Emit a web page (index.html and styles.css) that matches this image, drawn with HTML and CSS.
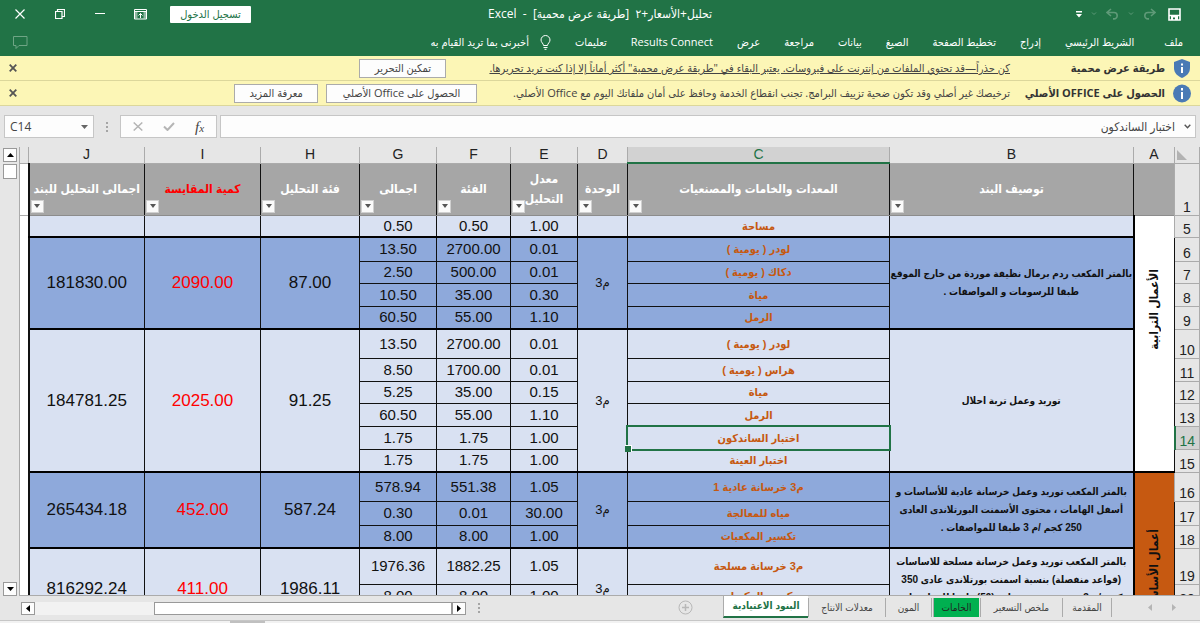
FILE: index.html
```
<!DOCTYPE html>
<html lang="ar" dir="rtl">
<head>
    <meta charset="UTF-8">
    <meta name="viewport" content="width=device-width, initial-scale=1.0">
    <title>تحليل+الأسعار+٢ - Excel</title>
    <link rel="stylesheet" href="styles.css">
</head>
<body>
    <header class="top">
        <div class="titlebar">
            <div class="quick">
                <button class="icon-btn save" aria-label="حفظ">
                    <svg width="13" height="13" viewBox="0 0 13 13"><path d="M1 1h11v11H1z M1 7.5h11" fill="none" stroke="#fff" stroke-width="1.6"/><path d="M3 8h7v4H7V9.500H5V12H3z" fill="#fff"/></svg>
                </button>
                <button class="icon-btn dim" aria-label="إعادة">
                    <svg width="13" height="12" viewBox="0 0 13 12"><path d="M8 1l4 3.500-4 3.500M12 4.500H5a3.200 3.200 0 0 0 0 6.400h1" fill="none" stroke="currentColor" stroke-width="1.600"/></svg>
                </button>
                <button class="icon-btn dim" aria-label="قائمة الإعادة">
                    <svg width="6" height="4" viewBox="0 0 6 4"><path d="M1 .5l2 2 2-2" fill="none" stroke="currentColor"/></svg>
                </button>
                <button class="icon-btn dim" aria-label="تراجع">
                    <svg width="13" height="12" viewBox="0 0 13 12"><path d="M5 1L1 4.500 5 8M1 4.500h7a3.200 3.200 0 0 1 0 6.400H7" fill="none" stroke="currentColor" stroke-width="1.600"/></svg>
                </button>
                <button class="icon-btn dim" aria-label="قائمة التراجع">
                    <svg width="6" height="4" viewBox="0 0 6 4"><path d="M1 .5l2 2 2-2" fill="none" stroke="currentColor"/></svg>
                </button>
                <button class="icon-btn" aria-label="تخصيص">
                    <svg width="6" height="7" viewBox="0 0 6 7"><path d="M0 0h6v1.500H0zM0 3h6L3 6.500z" fill="#fff"/></svg>
                </button>
            </div>
            <div class="doc-title">تحليل+الأسعار+٢&nbsp; [طريقة عرض محمية]&nbsp; -&nbsp; Excel</div>
            <div class="window">
                <button class="signin">تسجيل الدخول</button>
                <button class="win-btn" aria-label="خيارات عرض الشريط">
                    <svg width="13" height="11" viewBox="0 0 13 11"><path d="M.5.500h12v9.500H.5z" fill="none" stroke="#fff"/><path d="M1 2.500h11M6.500 9V4.500M4.500 6.500l2-2 2 2" fill="none" stroke="#fff"/><path d="M1 3h2.500v6.500H1zM9.500 3H12v6.500H9.500z" fill="#fff" opacity=".5"/></svg>
                </button>
                <button class="win-btn" aria-label="تصغير">
                    <svg width="10" height="10" viewBox="0 0 10 10"><path d="M0 4.500h10" stroke="#fff"/></svg>
                </button>
                <button class="win-btn" aria-label="استعادة">
                    <svg width="10" height="10" viewBox="0 0 10 10"><path d="M.5 2.500h6.500v7H.5zM2.500 2V.5h7v7H7.500" fill="none" stroke="#fff" stroke-width="1.200"/></svg>
                </button>
                <button class="win-btn" aria-label="إغلاق">
                    <svg width="10" height="10" viewBox="0 0 10 10"><path d="M.5.500l9 9M9.500.500l-9 9" stroke="#fff" stroke-width="1.200"/></svg>
                </button>
            </div>
        </div>
        <nav class="ribbon">
            <button class="tab file">ملف</button>
            <button class="tab">الشريط الرئيسي</button>
            <button class="tab">إدراج</button>
            <button class="tab">تخطيط الصفحة</button>
            <button class="tab">الصيغ</button>
            <button class="tab">بيانات</button>
            <button class="tab">مراجعة</button>
            <button class="tab">عرض</button>
            <button class="tab">Results Connect</button>
            <button class="tab">تعليمات</button>
            <button class="tab tell">
                <svg width="11" height="15" viewBox="0 0 11 15"><path d="M3.500 10.500C3.500 8.500 1 7.500 1 5a4.500 4.500 0 0 1 9 0c0 2.500-2.500 3.500-2.500 5.500zM3.500 12.500h4M4.500 14.300h2" fill="none" stroke="#fff"/></svg>
                أخبرنى بما تريد القيام به
            </button>
            <button class="comments" aria-label="تعليقات">
                <svg width="15" height="13" viewBox="0 0 15 13"><path d="M.5.500h13.500v9H6l-3 3v-3H.5z" fill="none" stroke="#6fa585"/></svg>
            </button>
        </nav>
    </header>

    <div class="notice">
        <svg class="notice-icon" width="18" height="19" viewBox="0 0 18 19"><path d="M9 0l8 3v6c0 5-3.500 8-8 10-4.500-2-8-5-8-10V3z" fill="#4a7ab5"/><path d="M8 8h2v6H8zM8 4.500h2v2H8z" fill="#fff"/></svg>
        <strong class="notice-label">طريقة عرض محمية</strong>
        <a class="notice-text" href="#">كن حذراً—قد تحتوي الملفات من إنترنت على فيروسات. يعتبر البقاء في "طريقة عرض محمية" أكثر أماناً إلا إذا كنت تريد تحريرها.</a>
        <button class="notice-btn edit">تمكين التحرير</button>
        <button class="notice-close" aria-label="إغلاق"><svg width="8" height="8" viewBox="0 0 8 8"><path d="M.7.700l6.600 6.600M7.300.700L.7 7.300" stroke="#555" stroke-width="1.800"/></svg></button>
    </div>
    <div class="notice">
        <svg class="notice-icon" width="18" height="19" viewBox="0 0 18 19"><circle cx="9" cy="9.500" r="9" fill="#4a7ab5"/><path d="M8 8h2v7H8zM8 4h2v2.500H8z" fill="#fff"/></svg>
        <strong class="notice-label">الحصول على OFFICE الأصلي</strong>
        <span class="notice-text">ترخيصك غير أصلي وقد تكون ضحية تزييف البرامج. تجنب انقطاع الخدمة وحافظ على أمان ملفاتك اليوم مع Office الأصلي.</span>
        <button class="notice-btn office">الحصول على Office الأصلي</button>
        <button class="notice-btn more">معرفة المزيد</button>
        <button class="notice-close" aria-label="إغلاق"><svg width="8" height="8" viewBox="0 0 8 8"><path d="M.7.700l6.600 6.600M7.300.700L.7 7.300" stroke="#555" stroke-width="1.800"/></svg></button>
    </div>

    <div class="formula">
        <div class="formula-box">
            <button class="icon-btn" aria-label="توسيع"><svg width="7" height="5" viewBox="0 0 7 5"><path d="M.7.700l2.800 3 2.800-3" fill="none" stroke="#555" stroke-width="1.400"/></svg></button>
            <input class="formula-input" aria-label="شريط الصيغة" value="اختبار الساندكون">
        </div>
        <div class="fx-box">
            <button class="icon-btn fx" aria-label="إدراج دالة"><i>f</i><i class="fx-small">x</i></button>
            <button class="icon-btn" aria-label="إدخال"><svg width="12" height="9" viewBox="0 0 12 9"><path d="M1 4.500l3.500 3.500L11 1" fill="none" stroke="#b5b5b5" stroke-width="2"/></svg></button>
            <button class="icon-btn" aria-label="إلغاء"><svg width="10" height="9" viewBox="0 0 10 9"><path d="M.7.500l8.600 8M9.300.500L.7 8.500" stroke="#b5b5b5" stroke-width="1.500"/></svg></button>
        </div>
        <span class="dots"></span>
        <div class="name-box">
            <button class="icon-btn" aria-label="الأسماء"><svg width="7" height="4" viewBox="0 0 7 4"><path d="M0 0h7L3.500 4z" fill="#666"/></svg></button>
            <input class="name-input" aria-label="مربع الاسم" value="C14" dir="ltr">
        </div>
    </div>

    <main class="sheet">
        <div class="grid-wrap">
            <table class="grid">
                <colgroup>
                    <col class="w-row"><col class="w-a"><col class="w-b"><col class="w-c"><col class="w-d"><col class="w-e"><col class="w-f"><col class="w-g"><col class="w-h"><col class="w-i"><col class="w-j"><col class="w-edge">
                </colgroup>
                <thead>
                    <tr class="letters">
                        <th class="corner"><svg width="10" height="10" viewBox="0 0 10 10"><path d="M0 0v10h10z" fill="#b2b2b2"/></svg></th>
                        <th>A</th><th>B</th><th class="picked">C</th><th>D</th><th>E</th><th>F</th><th>G</th><th>H</th><th>I</th><th>J</th><th></th>
                    </tr>
                    <tr class="titles">
                        <th class="num">1</th>
                        <th></th>
                        <th>توصيف البند<button class="filter" aria-label="تصفية"></button></th>
                        <th>المعدات والخامات والمصنعيات<button class="filter" aria-label="تصفية"></button></th>
                        <th>الوحدة<button class="filter" aria-label="تصفية"></button></th>
                        <th>معدل<br>التحليل<button class="filter" aria-label="تصفية"></button></th>
                        <th>الفئة<button class="filter" aria-label="تصفية"></button></th>
                        <th>اجمالى<button class="filter" aria-label="تصفية"></button></th>
                        <th>فئة التحليل<button class="filter" aria-label="تصفية"></button></th>
                        <th class="red">كمية المقايسة<button class="filter" aria-label="تصفية"></button></th>
                        <th>اجمالى التحليل للبند<button class="filter" aria-label="تصفية"></button></th>
                        <th class="edge"></th>
                    </tr>
                </thead>
                <tbody>
                    <tr class="r22 light last">
                        <th class="num">5</th>
                        <td class="section earth" rowspan="11"><span>الأعمال الترابية</span></td>
                        <td></td><td class="item">مساحة</td><td></td><td>1.00</td><td>0.50</td><td>0.50</td><td></td><td></td><td></td>
                        <td class="edge" rowspan="17"></td>
                    </tr>

                    <tr class="r24 dark">
                        <th class="num">6</th>
                        <td class="desc end" rowspan="4">بالمتر المكعب ردم برمال نظيفة موردة من خارج الموقع<br>طبقا للرسومات و المواصفات .</td>
                        <td class="item">لودر ( يومية )</td>
                        <td class="unit end" rowspan="4">م3</td>
                        <td>0.01</td><td>2700.00</td><td>13.50</td>
                        <td class="big end" rowspan="4">87.00</td><td class="big red end" rowspan="4">2090.00</td><td class="big end" rowspan="4">181830.00</td>
                    </tr>
                    <tr class="r22 dark"><th class="num">7</th><td class="item">دكاك ( يومية )</td><td>0.01</td><td>500.00</td><td>2.50</td></tr>
                    <tr class="r23 dark"><th class="num">8</th><td class="item">مياة</td><td>0.30</td><td>35.00</td><td>10.50</td></tr>
                    <tr class="r23 dark last"><th class="num">9</th><td class="item">الرمل</td><td>1.10</td><td>55.00</td><td>60.50</td></tr>

                    <tr class="r29 light">
                        <th class="num">10</th>
                        <td class="desc end" rowspan="6">توريد وعمل تربة احلال</td>
                        <td class="item">لودر ( يومية )</td>
                        <td class="unit end" rowspan="6">م3</td>
                        <td>0.01</td><td>2700.00</td><td>13.50</td>
                        <td class="big end" rowspan="6">91.25</td><td class="big red end" rowspan="6">2025.00</td><td class="big end" rowspan="6">184781.25</td>
                    </tr>
                    <tr class="r23 light"><th class="num">11</th><td class="item">هراس ( يومية )</td><td>0.01</td><td>1700.00</td><td>8.50</td></tr>
                    <tr class="r22 light"><th class="num">12</th><td class="item">مياة</td><td>0.15</td><td>35.00</td><td>5.25</td></tr>
                    <tr class="r23 light"><th class="num">13</th><td class="item">الرمل</td><td>1.10</td><td>55.00</td><td>60.50</td></tr>
                    <tr class="r23 light"><th class="num picked-row">14</th><td class="item selected">اختبار الساندكون</td><td>1.00</td><td>1.75</td><td>1.75</td></tr>
                    <tr class="r23 light last"><th class="num">15</th><td class="item">اختبار العينة</td><td>1.00</td><td>1.75</td><td>1.75</td></tr>

                    <tr class="r29 dark">
                        <th class="num">16</th>
                        <td class="section base" rowspan="6"><span>أعمال الأساسات</span></td>
                        <td class="desc end" rowspan="3">بالمتر المكعب توريد وعمل خرسانة عادية للأساسات و<br>أسفل الهامات ، محتوى الأسمنت البورتلاندى العادى<br>250 كجم /م 3 طبقا للمواصفات .</td>
                        <td class="item">م3 خرسانة عادية 1</td>
                        <td class="unit end" rowspan="3">م3</td>
                        <td>1.05</td><td>551.38</td><td>578.94</td>
                        <td class="big end" rowspan="3">587.24</td><td class="big red end" rowspan="3">452.00</td><td class="big end" rowspan="3">265434.18</td>
                    </tr>
                    <tr class="r24 dark"><th class="num">17</th><td class="item">مياه للمعالجة</td><td>30.00</td><td>0.01</td><td>0.30</td></tr>
                    <tr class="r23 dark last"><th class="num">18</th><td class="item">تكسير المكعبات</td><td>1.00</td><td>8.00</td><td>8.00</td></tr>

                    <tr class="r36 light">
                        <th class="num">19</th>
                        <td class="desc top-text" rowspan="3">بالمتر المكعب توريد وعمل خرسانة مسلحة للاساسات<br>(قواعد منفصلة) بنسبة اسمنت بورتلاندى عادى 350<br>كجم /م 3 وبنسبة حديد تسليح (59) طبقا للمواصفات</td>
                        <td class="item">م3 خرسانة مسلحة</td>
                        <td class="unit" rowspan="3">م3</td>
                        <td>1.05</td><td>1882.25</td><td>1976.36</td>
                        <td class="big" rowspan="3">1986.11</td><td class="big red" rowspan="3">411.00</td><td class="big" rowspan="3">816292.24</td>
                    </tr>
                    <tr class="r23 light"><th class="num">20</th><td class="item">تكسير المكعبات</td><td>1.00</td><td>8.00</td><td>8.00</td></tr>
                    <tr class="r23 light"><th class="num"></th><td></td><td></td><td></td><td></td></tr>
                </tbody>
            </table>
        </div>
        <div class="vscroll">
            <button class="scroll-btn" aria-label="لأعلى"><svg width="7" height="4" viewBox="0 0 7 4"><path d="M0 4h7L3.500 0z"/></svg></button>
            <div class="vthumb"></div>
            <button class="scroll-btn down" aria-label="لأسفل"><svg width="7" height="4" viewBox="0 0 7 4"><path d="M0 0h7L3.500 4z"/></svg></button>
        </div>
    </main>

    <footer class="bottom">
        <div class="sheets">
            <div class="arrows">
                <button class="icon-btn" aria-label="السابق"><svg width="4" height="7" viewBox="0 0 4 7"><path d="M0 0v7l4-3.500z" fill="#b5b5b5"/></svg></button>
                <button class="icon-btn" aria-label="التالي"><svg width="4" height="7" viewBox="0 0 4 7"><path d="M4 0v7L0 3.500z" fill="#b5b5b5"/></svg></button>
            </div>
            <button class="sheet-tab t-intro">المقدمة</button>
            <button class="sheet-tab t-price">ملخص التسعير</button>
            <button class="sheet-tab t-raw">الخامات</button>
            <button class="sheet-tab t-mix">المون</button>
            <button class="sheet-tab t-rates">معدلات الانتاج</button>
            <button class="sheet-tab t-active">البنود الاعتيادية</button>
            <button class="add-sheet" aria-label="ورقة جديدة"><svg width="15" height="15" viewBox="0 0 15 15"><circle cx="7.500" cy="7.500" r="6.500" fill="none" stroke="#b8b8b8"/><path d="M7.500 4v7M4 7.500h7" stroke="#b8b8b8" stroke-width="1.500"/></svg></button>
        </div>
        <span class="dots"></span>
        <div class="hscroll">
            <button class="scroll-btn" aria-label="لليمين"><svg width="4" height="7" viewBox="0 0 4 7"><path d="M0 0v7l4-3.500z"/></svg></button>
            <div class="hthumb"></div>
            <div class="htrack"></div>
            <button class="scroll-btn" aria-label="لليسار"><svg width="4" height="7" viewBox="0 0 4 7"><path d="M4 0v7L0 3.500z"/></svg></button>
        </div>
    </footer>
    <div class="status"><div class="status-mark"></div></div>
</body>
</html>
```
FILE: styles.css
```
*{
    box-sizing: border-box;
}
body{
    margin: 0;
    height: 100vh;
    display: flex;
    flex-direction: column;
    overflow: hidden;
    background: #e6e6e6;
    color: #444;
    font-family: "Open Sans", "DejaVu Sans Condensed", "DejaVu Sans", sans-serif;
    font-size: 11px;
    line-height: 16px;
}
button, input{
    font: inherit;
    color: inherit;
    margin: 0;
    padding: 0;
    border: none;
    background: none;
}
button{
    white-space: nowrap;
    cursor: pointer;
}
svg{
    display: block;
    flex: none;
}
.icon-btn{
    display: flex;
    align-items: center;
    justify-content: center;
}

/* title bar and ribbon tabs */
.top{
    flex: none;
    background: #217346;
    color: #fff;
}
.titlebar{
    display: grid;
    grid-template-columns: 1fr auto 1fr;
    align-items: center;
    height: 28px;
}
.doc-title{
    font-size: 12px;
}
.quick{
    display: flex;
    align-items: center;
    gap: 9px;
    padding-right: 19px;
}
.save{
    margin-left: 3px;
}
.dim{
    color: #5f9a78;
}
.window{
    display: flex;
    align-items: center;
    justify-content: flex-end;
}
.win-btn{
    width: 40px;
    height: 28px;
    display: flex;
    align-items: center;
    justify-content: center;
}
.signin{
    width: 81px;
    height: 17px;
    margin-left: 10px;
    line-height: 16px;
    background: #fff;
    color: #217346;
    border-radius: 1px;
}
.ribbon{
    display: flex;
    align-items: center;
    gap: 24px;
    height: 28px;
    padding: 0 17px 0 13px;
}
.file{
    margin-left: 6px;
}
.tell{
    display: flex;
    align-items: center;
    gap: 11px;
}
.comments{
    margin-right: auto;
}

/* yellow message bars */
.notice{
    flex: none;
    display: flex;
    align-items: center;
    height: 25px;
    padding: 0 9px;
    background: #fcf6b6;
    border-bottom: 1px solid #dcd79b;
}
.notice-label{
    width: 155px;
    margin-right: 8px;
    color: #333;
    white-space: nowrap;
}
.notice-text{
    color: #444;
    white-space: nowrap;
}
.notice-btn{
    height: 19px;
    margin-right: 8px;
    border: 1px solid #ababab;
    background: #fdfdfd;
}
.edit{
    width: 87px;
    margin-right: 43px;
}
.office{
    width: 151px;
    margin-right: 36px;
}
.more{
    width: 84px;
}
.notice-close{
    margin-right: auto;
}

/* formula bar */
.formula{
    flex: none;
    display: flex;
    height: 41px;
    padding: 9px 4px;
}
.formula-box, .fx-box, .name-box{
    display: flex;
    align-items: center;
    height: 23px;
    background: #fdfdfd;
    border: 1px solid #c6c6c6;
}
.formula-box{
    flex: 1;
    gap: 9px;
    padding-right: 4px;
    font-size: 12px;
}
.formula-input{
    flex: 1;
    min-width: 0;
}
.fx-box{
    width: 97px;
    margin-right: 3px;
    justify-content: space-around;
    padding: 0 2px;
}
.fx{
    font-family: "Liberation Serif", serif;
    font-size: 15px;
    direction: ltr;
    color: #444;
}
.fx-small{
    font-size: 11px;
    padding-top: 3px;
}
.dots{
    width: 26px;
    background: linear-gradient(#a5a5a5, #a5a5a5) center 7px / 2px 2px no-repeat, linear-gradient(#a5a5a5, #a5a5a5) center 11px / 2px 2px no-repeat, linear-gradient(#a5a5a5, #a5a5a5) center 15px / 2px 2px no-repeat;
}
.name-box{
    width: 90px;
    padding: 0 5px;
    font-size: 12px;
}
.name-input{
    flex: 1;
    min-width: 0;
}

/* worksheet */
.sheet{
    flex: 1;
    min-height: 0;
    display: flex;
}
.grid-wrap{
    flex: 1;
    min-width: 0;
    overflow: hidden;
    border-bottom: 1px solid #ababab;
}
.grid{
    width: 100%;
    table-layout: fixed;
    border-collapse: collapse;
    font-family: "Liberation Sans", "DejaVu Sans Condensed", "DejaVu Sans", sans-serif;
    font-size: 14px;
    line-height: 18px;
    color: #111;
    text-align: center;
}
.w-row{ width: 25px; }
.w-a{ width: 41px; }
.w-b{ width: 244px; }
.w-d{ width: 50px; }
.w-e{ width: 67px; }
.w-f{ width: 74px; }
.w-g{ width: 77px; }
.w-h{ width: 99px; }
.w-i{ width: 116px; }
.w-j{ width: 116px; }
.w-edge{ width: 9px; }
.grid th, .grid td{
    padding: 0;
    border: 1px solid #111;
}
.letters th{
    height: 16px;
    line-height: 15px;
    font-weight: normal;
    color: #222;
    background: #e6e6e6;
    border: 1px solid #ababab;
    border-top: none;
}
.letters .picked{
    background: #d2d2d2;
    color: #217346;
    border-bottom: 2px solid #217346;
}
.corner svg{
    margin-right: 12px;
}
.grid .num{
    background: #e6e6e6;
    border: 1px solid #ababab;
    font-weight: normal;
    line-height: 16px;
    color: #222;
    vertical-align: bottom;
}
.grid .picked-row{
    background: #d2d2d2;
    color: #217346;
    border-left: 2px solid #217346;
}
.titles th{
    position: relative;
    height: 52px;
    background: #a6a6a6;
    color: #fff;
    font-size: 12px;
    line-height: 20px;
    white-space: nowrap;
    border-bottom: 1px solid #8c8c8c;
}
.grid .edge{
    background: #fff;
    border: 1px solid #ababab;
    border-right: 2px solid #111;
}
.titles .num{
    font-size: 14px;
    line-height: 16px;
}
.grid .red{
    color: #f00;
}
.filter{
    position: absolute;
    left: 1px;
    bottom: 2px;
    width: 13px;
    height: 13px;
    background: #fafafa;
    border: 1px solid #d0d0d0;
}
.filter::after{
    content: "";
    display: block;
    width: 0;
    margin: 0 auto;
    border: 3px solid transparent;
    border-top: 4px solid #555;
    border-bottom: none;
}
.light td{
    background: #d9e1f2;
}
.dark td{
    background: #8ea9db;
}
.r22{ height: 22px; }
.r23{ height: 23px; }
.r24{ height: 24px; }
.r29{ height: 29px; }
.r36{ height: 36px; }
.last td, .grid .end{
    border-bottom: 2px solid #000;
}
.grid tbody td{
    font-size: 15px;
}
.grid tbody .item{
    font-size: 11px;
    font-weight: bold;
    color: #c65911;
}
.grid tbody .unit{
    font-size: 13px;
}
.grid tbody .big{
    font-size: 17px;
}
.grid tbody .desc{
    font-size: 10px;
    font-weight: bold;
    white-space: nowrap;
}
.grid tbody .top-text{
    vertical-align: top;
    padding-top: 4px;
}
.grid tbody .section{
    vertical-align: top;
    border-left: 2px solid #000;
    font-size: 12px;
    font-weight: bold;
}
.grid .section span{
    display: inline-block;
    writing-mode: vertical-rl;
    transform: rotate(180deg);
    white-space: nowrap;
}
.grid .earth{
    background: #fff;
    padding-top: 53px;
    border-bottom: 2px solid #000;
}
.grid .base{
    background: #c65911;
    padding-top: 56px;
}
.selected{
    position: relative;
}
.selected::before{
    content: "";
    position: absolute;
    inset: -2px;
    border: 2px solid #217346;
}
.selected::after{
    content: "";
    position: absolute;
    left: -3px;
    bottom: -3px;
    width: 6px;
    height: 6px;
    background: #217346;
    border: 1px solid #fff;
    border-bottom: none;
    border-left: none;
}

/* scroll bars */
.vscroll{
    width: 19px;
    padding: 1px 2px 0 3px;
    display: flex;
    flex-direction: column;
    gap: 2px;
}
.scroll-btn{
    flex: none;
    width: 14px;
    height: 14px;
    display: flex;
    align-items: center;
    justify-content: center;
    background: #fdfdfd;
    border: 1px solid #999;
}
.vthumb{
    height: 15px;
    width: 14px;
    background: #fff;
    border: 1px solid #999;
}
.down{
    margin-top: auto;
}

/* sheet tabs */
.bottom{
    flex: none;
    display: flex;
    height: 24px;
    font-family: "Liberation Sans", "DejaVu Sans Condensed", "DejaVu Sans", sans-serif;
}
.sheets{
    flex: 1;
    display: flex;
    align-items: flex-start;
}
.arrows{
    display: flex;
    gap: 20px;
    height: 22px;
    padding: 0 24px 0 36px;
}
.sheet-tab{
    height: 19px;
    margin-top: 2px;
    font-size: 10px;
    border-left: 1px solid #ababab;
}
.t-intro{
    width: 50px;
    border-right: 1px solid #ababab;
}
.t-price{
    width: 82px;
}
.t-raw{
    width: 46px;
    margin: 2px 1px;
    background: #00b050;
    color: #222;
}
.t-mix{
    width: 47px;
    border-right: 1px solid #ababab;
}
.t-rates{
    width: 77px;
}
.t-active{
    width: 85px;
    height: 22px;
    margin-top: 0;
    background: #fff;
    color: #217346;
    font-weight: bold;
    border-bottom: 2px solid #217346;
}
.add-sheet{
    margin: 4px 30px 0 0;
}
.hscroll{
    width: 445px;
    height: 13px;
    margin: 6px 0 0 21px;
    display: flex;
    background: #f2f2f2;
}
.hscroll .scroll-btn{
    height: 13px;
}
.hthumb{
    flex: 5;
    background: #fff;
    border: 1px solid #999;
}
.htrack{
    flex: 2;
}
.status{
    flex: none;
    height: 3px;
    border-top: 1px solid #c6c6c6;
    background: #f2f2f2;
    padding-left: 230px;
}
.status-mark{
    width: 35px;
    height: 2px;
    margin-right: auto;
    background: #c0c0c0;
}
```
